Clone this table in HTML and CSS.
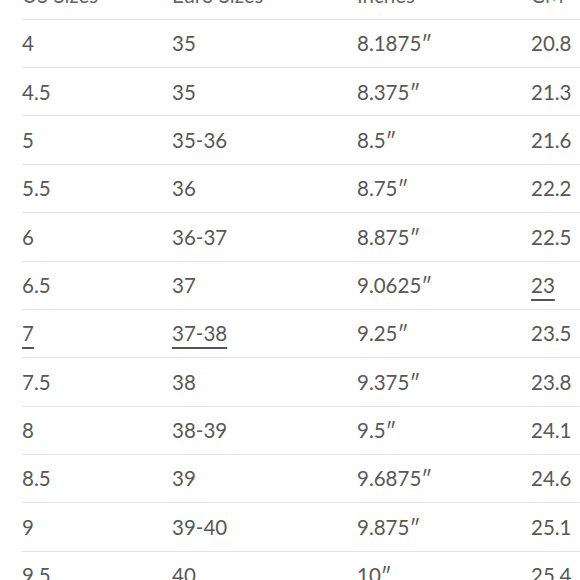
FILE: index.html
```html
<!DOCTYPE html>
<html>
<head>
<meta charset="utf-8">
<link rel="stylesheet" href="styles.css">
</head>
<body>
<div class="table">
  <div class="row head"><span>US Sizes</span><span>Euro Sizes</span><span>Inches</span><span>CM</span></div>
  <div class="row"><span>4</span><span>35</span><span>8.1875″</span><span>20.8</span></div>
  <div class="row"><span>4.5</span><span>35</span><span>8.375″</span><span>21.3</span></div>
  <div class="row"><span>5</span><span>35-36</span><span>8.5″</span><span>21.6</span></div>
  <div class="row"><span>5.5</span><span>36</span><span>8.75″</span><span>22.2</span></div>
  <div class="row"><span>6</span><span>36-37</span><span>8.875″</span><span>22.5</span></div>
  <div class="row"><span>6.5</span><span>37</span><span>9.0625″</span><span><u class="link">23</u></span></div>
  <div class="row"><span><u class="link">7</u></span><span><u class="link">37-38</u></span><span>9.25″</span><span>23.5</span></div>
  <div class="row"><span>7.5</span><span>38</span><span>9.375″</span><span>23.8</span></div>
  <div class="row"><span>8</span><span>38-39</span><span>9.5″</span><span>24.1</span></div>
  <div class="row"><span>8.5</span><span>39</span><span>9.6875″</span><span>24.6</span></div>
  <div class="row"><span>9</span><span>39-40</span><span>9.875″</span><span>25.1</span></div>
  <div class="row"><span>9.5</span><span>40</span><span>10″</span><span>25.4</span></div>
  <div class="row"><span>10</span><span>40-41</span><span>10.1875″</span><span>25.7</span></div>
</div>
</body>
</html>
```
FILE: styles.css
```css
html, body {
  margin: 0;
  padding: 0;
  background: #ffffff;
  overflow: hidden;
}
body {
  width: 580px;
  height: 580px;
  font-family: Lato, "Open Sans", sans-serif;
  color: #585858;
}
.table {
  margin-top: -28.6px;
  margin-left: 22px;
  width: 600px;
}
.row {
  display: grid;
  grid-template-columns: 150px 185px 174px 1fr;
  align-items: center;
  height: 48.36px;
  box-sizing: border-box;
  border-bottom: 1px solid #e3e3e3;
  font-size: 20.5px;
  line-height: 1;
}
.row span {
  white-space: nowrap;
}
.head {
  color: #666666;
}
.link {
  text-decoration: underline;
  text-decoration-thickness: 2px;
  text-underline-offset: 6px;
  text-decoration-color: #555555;
}
```
